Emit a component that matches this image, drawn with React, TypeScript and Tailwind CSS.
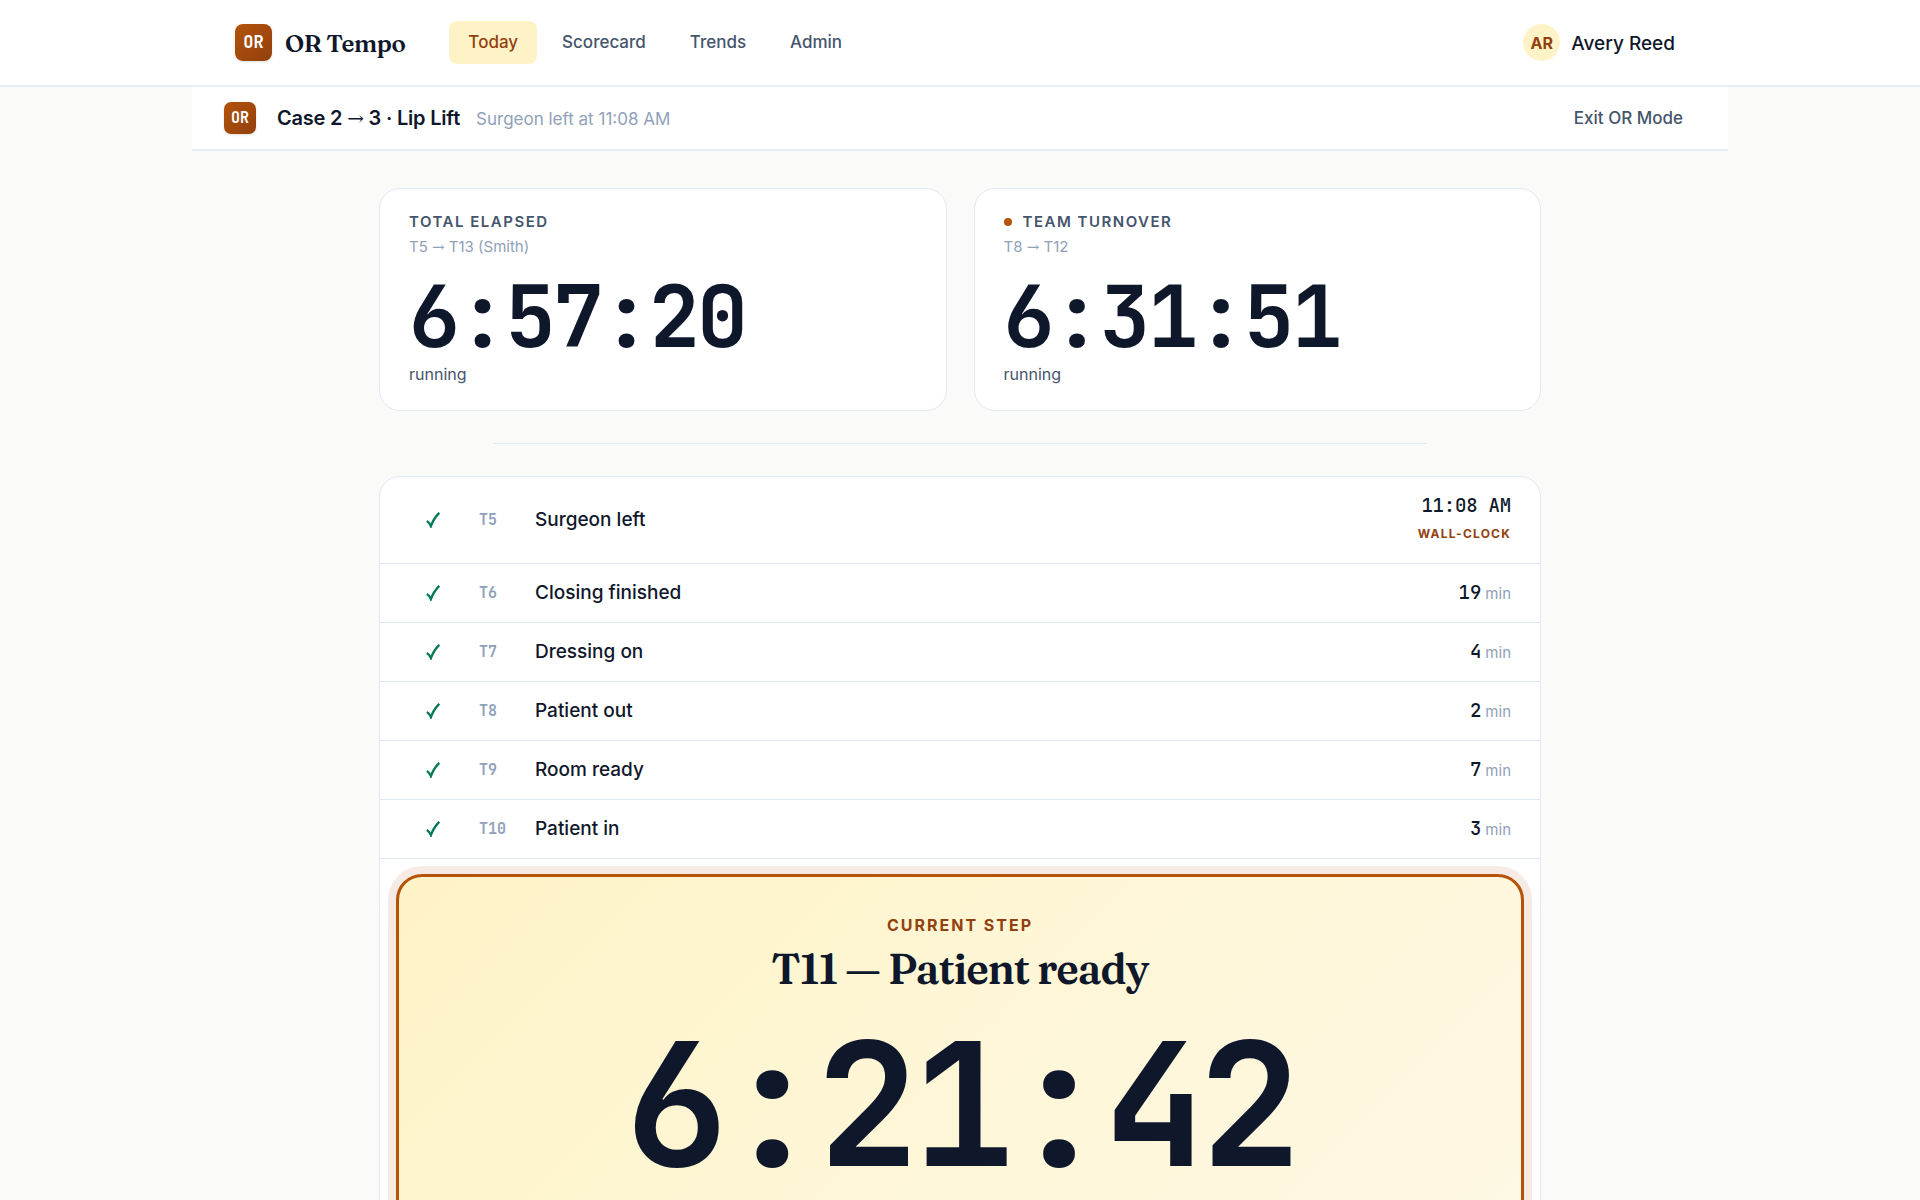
const SANS = "font-['Inter','Liberation_Sans',sans-serif]"
const MONO = "font-['JetBrains_Mono','DejaVu_Sans_Mono',monospace]"
const SERIF = "font-['Fraunces','Liberation_Serif',serif]"

type Step = {
  code: string
  label: string
  minutes?: number
  clock?: string
}

const navItems = ['Today', 'Scorecard', 'Trends', 'Admin']

const steps: Step[] = [
  { code: 'T5', label: 'Surgeon left', clock: '11:08 AM' },
  { code: 'T6', label: 'Closing finished', minutes: 19 },
  { code: 'T7', label: 'Dressing on', minutes: 4 },
  { code: 'T8', label: 'Patient out', minutes: 2 },
  { code: 'T9', label: 'Room ready', minutes: 7 },
  { code: 'T10', label: 'Patient in', minutes: 3 },
]

const CheckIcon = () => (
  <svg viewBox="0 0 14 16" className="h-4 w-3.5 text-[#047857]" aria-label="Done">
    <path d="M.8 9Q3.4 10.2 4.9 14.2 7.4 6.8 13.2.8" fill="none" stroke="currentColor" strokeWidth="2.3" />
  </svg>
)

const Arrow = () => <span className="font-['DejaVu_Serif'] font-normal">→</span>

const Header = () => (
  <header className="border-b-2 border-[#e8edf4] bg-white">
    <div className="mx-auto flex h-[85px] max-w-[1536px] items-center px-[43px]">
      <div className="flex items-center gap-[13px]">
        <span
          className={`flex h-[37px] w-[37px] items-center justify-center rounded-lg bg-linear-to-br from-[#b45309] to-[#92400e] text-[17px] font-bold text-white shadow-sm ${MONO}`}
        >
          OR
        </span>
        <span className={`pt-0.5 text-2xl font-semibold tracking-[-0.4px] text-slate-900 ${SERIF}`}>OR Tempo</span>
      </div>
      <nav className="ml-11 flex gap-1.5">
        {navItems.map((item) => (
          <a
            key={item}
            href="#"
            className={
              item === 'Today'
                ? 'rounded-lg bg-[#fef3c7] px-[19px] py-2 text-[17px] leading-[27px] font-medium text-[#92400e]'
                : 'rounded-lg px-[19px] py-2 text-[17px] leading-[27px] font-medium text-slate-600'
            }
          >
            {item}
          </a>
        ))}
      </nav>
      <div className="ml-auto flex items-center gap-[11px] pr-[10px]">
        <span className="flex h-[37px] w-[37px] items-center justify-center rounded-full bg-[#fef3c7] text-base font-bold text-[#92400e]">
          AR
        </span>
        <span className="pt-0.5 text-[19px] leading-6 font-medium text-slate-900">Avery Reed</span>
      </div>
    </div>
  </header>
)

const CaseBar = () => (
  <div className="mx-auto flex h-16 max-w-[1536px] items-center border-b-2 border-[#e8edf4] bg-white px-8">
    <span
      className={`flex h-8 w-8 items-center justify-center rounded-[7px] bg-linear-to-br from-[#b45309] to-[#92400e] text-[15px] font-bold text-white shadow-sm ${MONO}`}
    >
      OR
    </span>
    <div className="ml-[21px] flex items-baseline gap-4">
      <h1 className="text-xl font-semibold tracking-[-0.2px] text-slate-900">
        Case 2 <Arrow /> 3 · Lip Lift
      </h1>
      <span className="text-[17px] text-slate-400">Surgeon left at 11:08 AM</span>
    </div>
    <button type="button" className="ml-auto px-[13px] pt-0.5 text-[17px] font-medium text-slate-600">
      Exit OR Mode
    </button>
  </div>
)

type TimerCardProps = {
  title: string
  from: string
  to: string
  time: string
  live?: boolean
}

const TimerCard = ({ title, from, to, time, live }: TimerCardProps) => (
  <section className="flex-1 rounded-[21px] border border-slate-200 bg-white px-[29px] pt-[23px] pb-6">
    <h2 className="flex items-center gap-[11px] text-[15px] leading-5 font-semibold tracking-[1.5px] text-slate-600 uppercase">
      {live ? <span className="h-2 w-2 rounded-full bg-[#b45309]" /> : null}
      {title}
    </h2>
    <p className="mt-[5px] text-[15px] leading-5 text-slate-400">
      {from} <Arrow /> {to}
    </p>
    <p className={`mt-[17px] text-[85px] leading-[85px] font-semibold tracking-[-3px] text-slate-900 ${MONO}`}>
      {time}
    </p>
    <p className="mt-[3px] text-base leading-6 text-slate-600">running</p>
  </section>
)

const StepRow = ({ code, label, minutes, clock }: Step) => (
  <li
    className={`flex items-center border-b border-slate-200 px-[29px] ${clock ? 'h-[87px]' : 'h-[59px]'}`}
  >
    <span className="flex w-12 justify-center">
      <CheckIcon />
    </span>
    <span className={`ml-[22px] w-14 text-[15px] font-semibold text-slate-400 ${MONO}`}>{code}</span>
    <span className="flex-1 text-[19px] font-medium text-slate-900">{label}</span>
    {clock ? (
      <span className="flex flex-col items-end gap-2">
        <span className={`text-[19px] leading-6 font-medium tracking-[-0.2px] text-slate-900 ${MONO}`}>{clock}</span>
        <span className="pb-1 text-xs leading-4 font-bold tracking-[1.2px] text-[#92400e] uppercase">Wall-clock</span>
      </span>
    ) : (
      <span className="flex items-baseline gap-1">
        <span className={`text-[19px] font-medium text-slate-900 ${MONO}`}>{minutes}</span>
        <span className="text-[15px] text-slate-400">min</span>
      </span>
    )}
  </li>
)

const CurrentStep = () => (
  <section className="mx-4 mt-[15px] mb-4 rounded-[26px] border-[3px] border-[#b45309] bg-linear-135 from-[#fef3c7] to-[#fef9e7] px-8 pt-9 pb-40 text-center shadow-[0_0_0_8px_rgba(180,83,9,0.1),0_8px_24px_rgba(180,83,9,0.06)]">
    <p className="text-base leading-6 font-bold tracking-[2px] text-[#92400e] uppercase">Current step</p>
    <h2 className={`mt-[5px] text-[42px] leading-[54px] font-semibold tracking-tight text-slate-900 ${SERIF}`}>
      T11 — Patient ready
    </h2>
    <p className={`mt-[23px] text-[171px] leading-[171px] font-semibold tracking-[-7px] text-slate-900 ${MONO}`}>
      6:21:42
    </p>
  </section>
)

export default function App() {
  return (
    <div className={`h-screen overflow-hidden bg-[#fafaf9] ${SANS}`}>
      <Header />
      <CaseBar />
      <main className="mx-auto max-w-[1162px] pt-[37px]">
        <div className="flex gap-[27px]">
          <TimerCard title="Total elapsed" from="T5" to="T13 (Smith)" time="6:57:20" />
          <TimerCard title="Team turnover" from="T8" to="T12" time="6:31:51" live />
        </div>
        <hr className="mx-[114px] my-8 border-slate-200" />
        <div className="rounded-[21px] border border-slate-200 bg-white">
          <ol>
            {steps.map((step) => (
              <StepRow key={step.code} {...step} />
            ))}
          </ol>
          <CurrentStep />
        </div>
      </main>
    </div>
  )
}
